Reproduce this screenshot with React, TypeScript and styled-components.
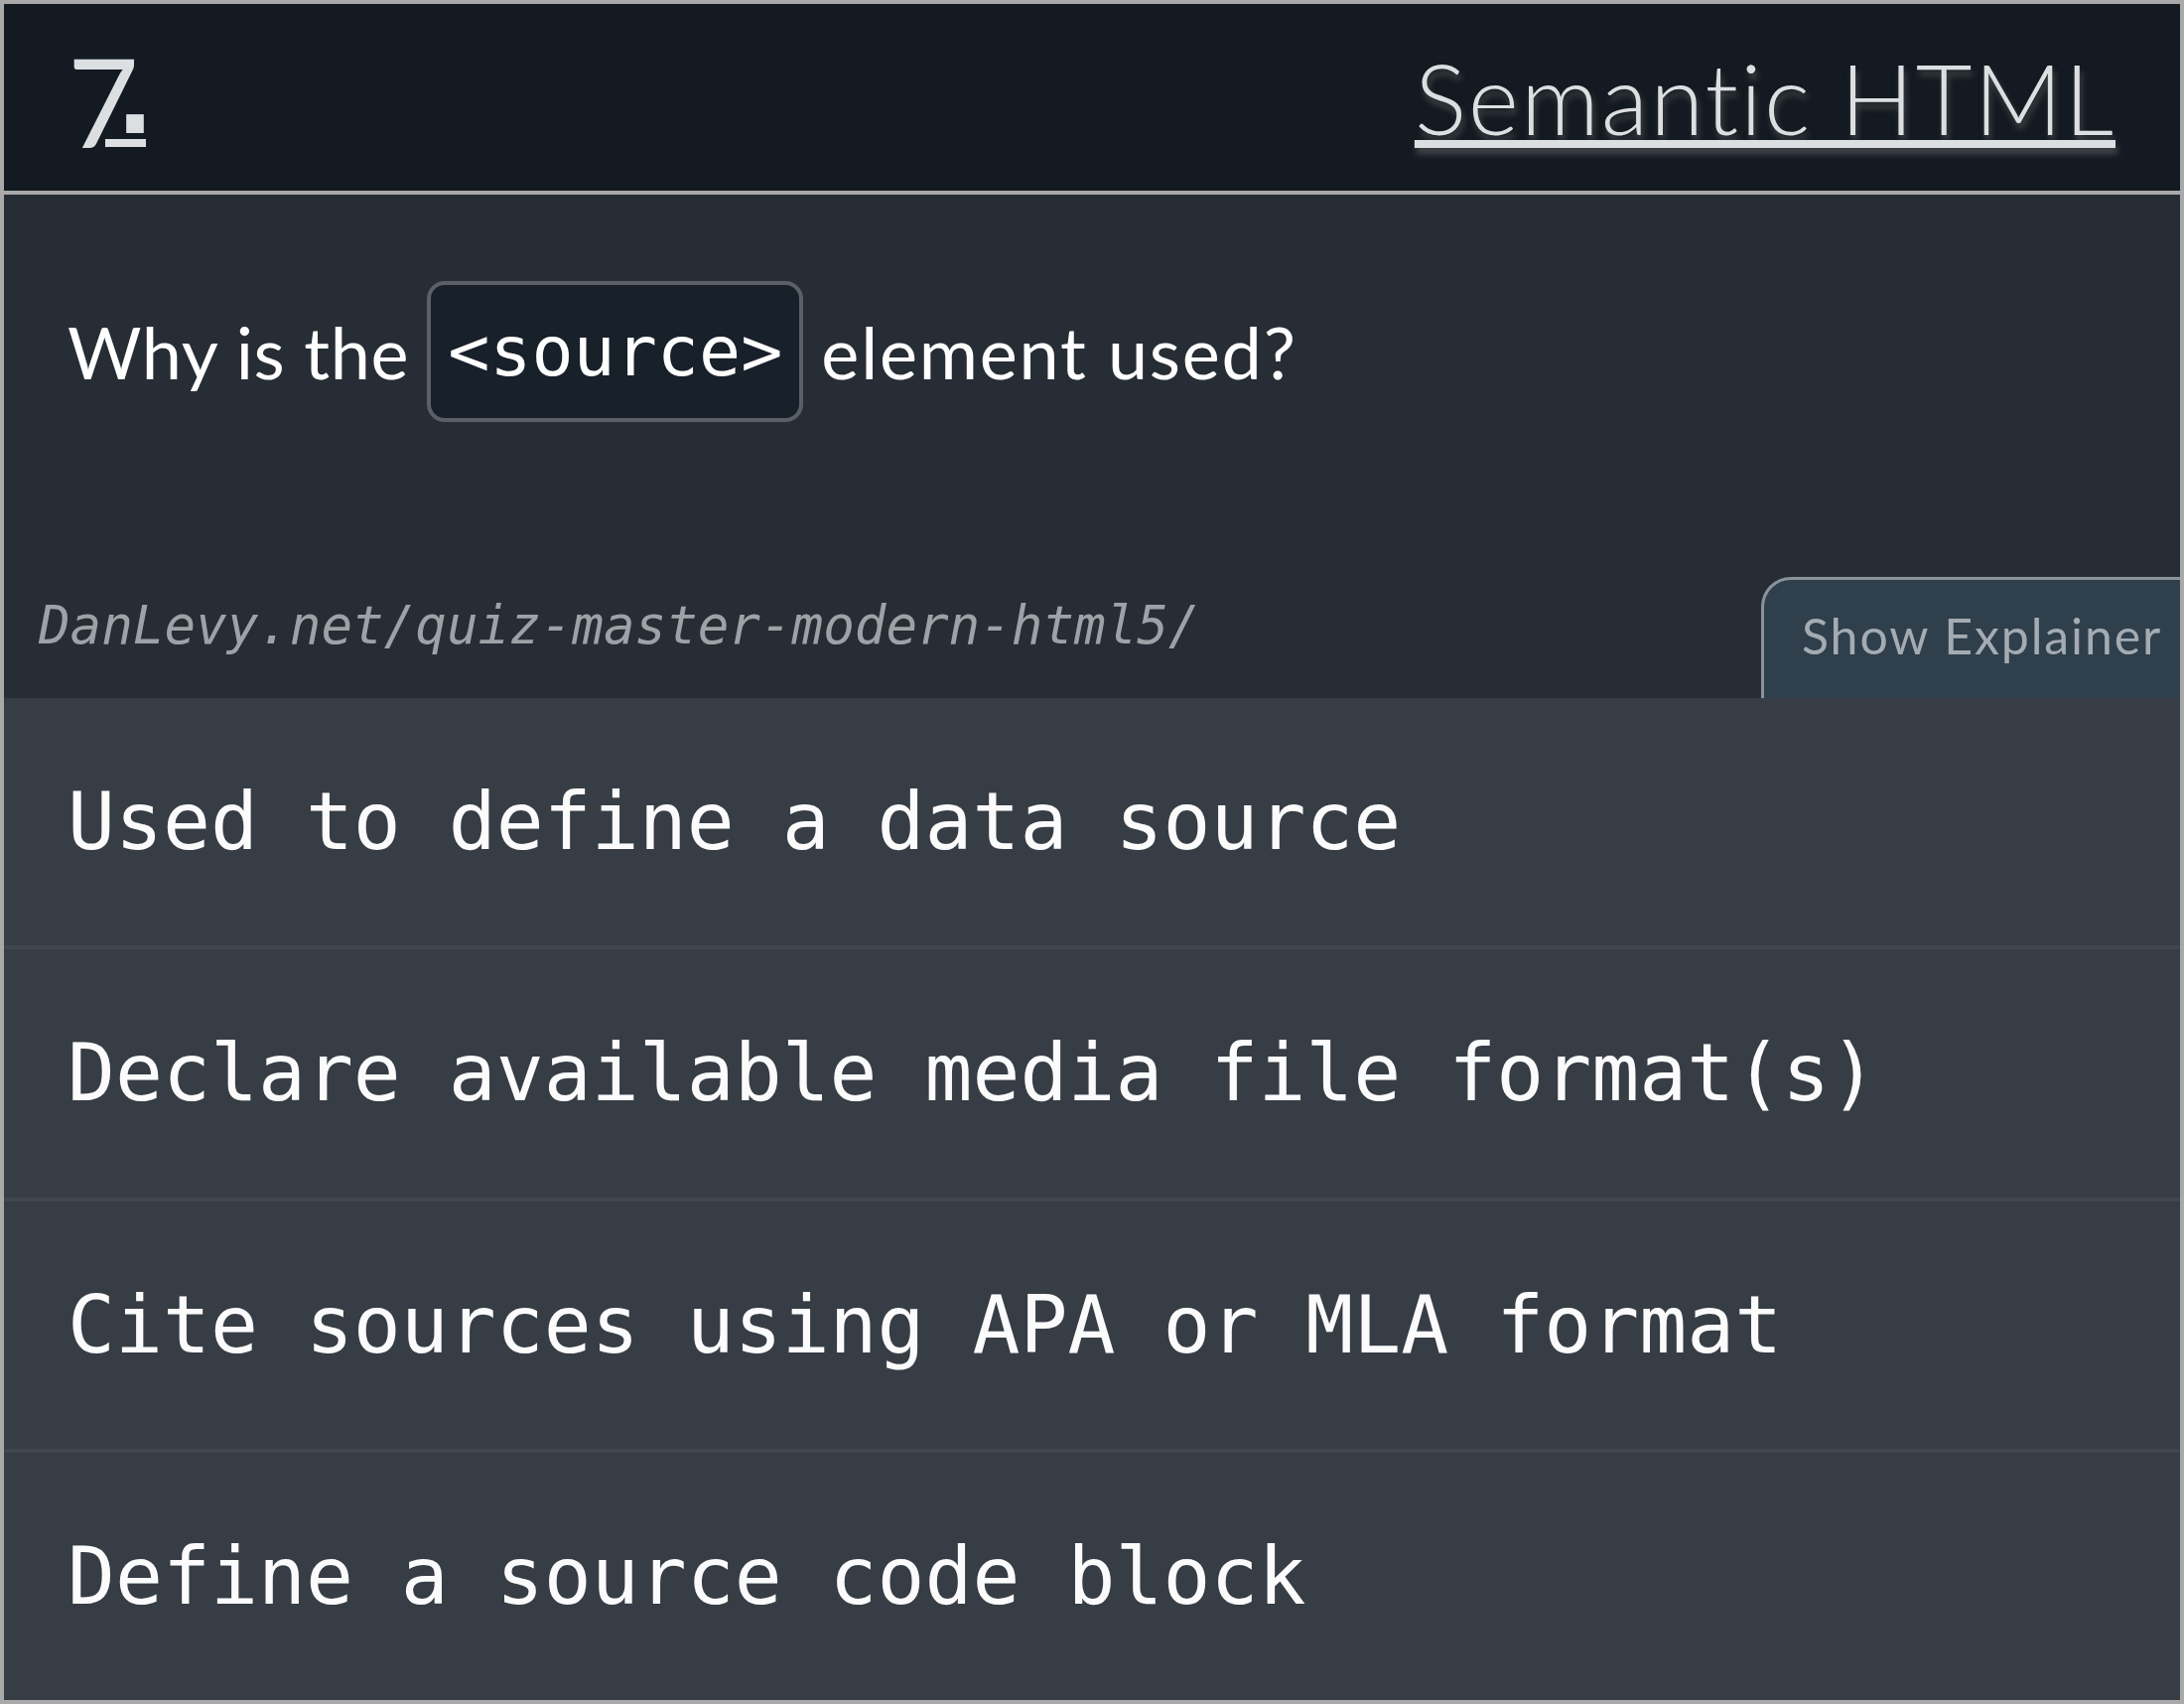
import React from "react";
import styled, { createGlobalStyle } from "styled-components";

const GlobalStyle = createGlobalStyle`
  html, body { margin: 0; padding: 0; background: #a9a9a9; }
  body { font-family: Lato, "Noto Sans", sans-serif; }
  *, *::before, *::after { box-sizing: border-box; }
`;

const Card = styled.main`
  width: 2200px;
  height: 1716px;
  border: 4px solid #a9a9a9;
  display: flex;
  flex-direction: column;
  background: #272d34;
  overflow: hidden;
`;

const Header = styled.header`
  flex: 0 0 192px;
  background: #131a21;
  border-bottom: 4px solid #a9a9a9;
  padding: 0 65px 0 64px;
  display: flex;
  align-items: center;
  justify-content: space-between;
`;

const Brand = styled.a`
  display: flex;
  align-items: flex-end;
  color: #dcdfe2;
  text-decoration: none;
  margin-top: 6px;
`;

const Digit = styled.span`
  font-family: Lato, sans-serif;
  font-weight: 400;
  font-size: 124px;
  line-height: 0.75;
`;

const Period = styled.span`
  display: inline-block;
  width: 41px;
  margin-left: -34px;
  text-align: right;
  border-bottom: 8px solid #dcdfe2;
  font-family: "DejaVu Sans", sans-serif;
  font-weight: bold;
  font-size: 100px;
  line-height: 81px;
`;

const Dot = styled.span`
  margin-right: -8px;
`;

const Title = styled.h1`
  margin: 0;
  font-family: Lato, sans-serif;
  font-weight: 300;
  font-size: 98px;
  letter-spacing: 2px;
  line-height: 1;
  color: #dcdfe2;
  text-decoration: underline;
  text-decoration-thickness: 8px;
  text-underline-offset: 5px;
  text-shadow: 2px 6px 6px rgba(110, 110, 110, 0.55);
`;

const QuestionArea = styled.section`
  flex: 0 0 507px;
  display: flex;
  flex-direction: column;
  justify-content: space-between;
`;

const Question = styled.h2`
  margin: 0;
  padding: 87px 64px 0;
  display: flex;
  align-items: center;
  gap: 18px;
  font-family: Lato, sans-serif;
  font-weight: 400;
  font-size: 72px;
  letter-spacing: 1px;
  color: #ffffff;
`;

const Words = styled.span<{ $spread?: number }>`
  letter-spacing: ${(p) => p.$spread ?? 1}px;
`;

const Code = styled.code`
  font-family: "DejaVu Sans Mono", monospace;
  font-size: 70px;
  letter-spacing: 0;
  line-height: 134px;
  padding: 0 17px;
  border: 4px solid #5b6066;
  border-radius: 18px;
  background: #18202a;
  color: #ffffff;
`;

const MetaRow = styled.div`
  height: 122px;
  display: flex;
  justify-content: space-between;
  align-items: flex-start;
`;

const SourceUrl = styled.span`
  padding: 17px 0 0 35px;
  font-family: "DejaVu Sans Mono", monospace;
  font-style: italic;
  font-size: 52.5px;
  line-height: 64px;
  color: #9da2a7;
`;

const ExplainerButton = styled.button`
  width: 422px;
  height: 122px;
  display: flex;
  align-items: flex-start;
  padding: 26px 0 0 38px;
  background: #2f3f4c;
  border: 3px solid #8b9299;
  border-right: 0;
  border-bottom: 0;
  border-top-left-radius: 30px;
  color: #a4abb2;
  font-family: Lato, sans-serif;
  font-size: 50px;
  letter-spacing: 1.9px;
  line-height: 60px;
  white-space: nowrap;
  cursor: pointer;
`;

const Answers = styled.ol`
  flex: 1;
  margin: 0;
  padding: 0;
  list-style: none;
  display: flex;
  flex-direction: column;
  gap: 4px;
  background: #41474e;
`;

const Answer = styled.li`
  flex: 1;
  display: flex;
  align-items: center;
  padding: 0 64px;
  background: #373d45;
  font-family: "DejaVu Sans Mono", monospace;
  font-size: 79.7px;
  color: #fbfbfb;
  white-space: pre;
`;

const answers = [
  "Used to define a data source",
  "Declare available media file format(s)",
  "Cite sources using APA or MLA format",
  "Define a source code block",
];

export default function App() {
  return (
    <>
      <GlobalStyle />
      <Card>
        <Header>
          <Brand href="#">
            <Digit>7</Digit>
            <Period>
              <Dot>.</Dot>
            </Period>
          </Brand>
          <Title>Semantic HTML</Title>
        </Header>
        <QuestionArea>
          <Question>
            <Words $spread={0.6}>Why is the</Words>
            <Code>&lt;source&gt;</Code>
            <Words $spread={1.8}>element used?</Words>
          </Question>
          <MetaRow>
            <SourceUrl>DanLevy.net/quiz-master-modern-html5/</SourceUrl>
            <ExplainerButton>Show Explainer</ExplainerButton>
          </MetaRow>
        </QuestionArea>
        <Answers>
          {answers.map((a) => (
            <Answer key={a}>{a}</Answer>
          ))}
        </Answers>
      </Card>
    </>
  );
}
